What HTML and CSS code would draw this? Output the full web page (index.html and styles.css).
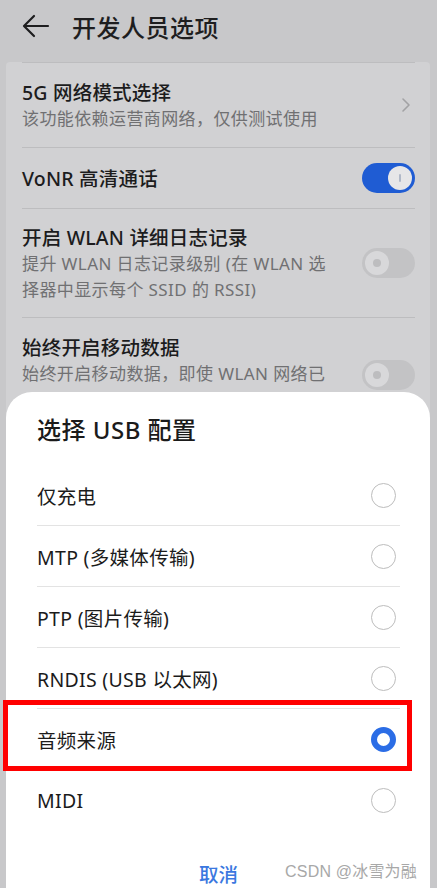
FILE: index.html
```html
<!DOCTYPE html>
<html lang="zh-CN">
<head>
<meta charset="utf-8">
<title>开发人员选项</title>
<link rel="stylesheet" href="styles.css">
</head>
<body>
<div class="screen">
  <header class="topbar">
    <svg class="back" width="28" height="24" viewBox="0 0 28 24"><path d="M26 12H3M12 2L2 12l10 10" fill="none" stroke="#1e1e1f" stroke-width="2.2" stroke-linecap="round" stroke-linejoin="round"/></svg>
    <h1 class="title">开发人员选项</h1>
  </header>
  <section class="card">
    <div class="row r1">
      <div class="txt">
        <div class="rt">5G 网络模式选择</div>
        <div class="rs">该功能依赖运营商网络，仅供测试使用</div>
      </div>
      <svg class="chev" width="10" height="16" viewBox="0 0 10 16"><path d="M2 2l6 6-6 6" fill="none" stroke="#a2a2a4" stroke-width="1.6" stroke-linecap="round" stroke-linejoin="round"/></svg>
    </div>
    <div class="row r2">
      <div class="txt"><div class="rt">VoNR 高清通话</div></div>
      <span class="tog on"><span class="knob"></span></span>
    </div>
    <div class="row r3">
      <div class="txt">
        <div class="rt">开启 WLAN 详细日志记录</div>
        <div class="rs">提升 WLAN 日志记录级别 (在 WLAN 选<br>择器中显示每个 SSID 的 RSSI)</div>
      </div>
      <span class="tog off"><span class="knob"></span></span>
    </div>
    <div class="row r4">
      <div class="txt">
        <div class="rt">始终开启移动数据</div>
        <div class="rs">始终开启移动数据，即使 WLAN 网络已</div>
      </div>
      <span class="tog off"><span class="knob"></span></span>
    </div>
  </section>

  <div class="dialog">
    <h2 class="dtitle">选择 USB 配置</h2>
    <ul class="opts">
      <li class="opt"><span>仅充电</span><span class="radio"></span></li>
      <li class="opt"><span>MTP (多媒体传输)</span><span class="radio"></span></li>
      <li class="opt"><span>PTP (图片传输)</span><span class="radio"></span></li>
      <li class="opt"><span>RNDIS (USB 以太网)</span><span class="radio"></span></li>
      <li class="opt"><span>音频来源</span><span class="radio sel"></span></li>
      <li class="opt last"><span>MIDI</span><span class="radio"></span></li>
    </ul>
    <div class="foot">
      <span class="cancel">取消</span>
    </div>
  </div>
  <div class="mark"></div>
  <div class="wm">CSDN @冰雪为融</div>
</div>
</body>
</html>
```
FILE: styles.css
```css
* { box-sizing: border-box; margin: 0; padding: 0; }
html, body { width: 437px; height: 888px; overflow: hidden; }
body {
  background: #c8c8ca;
  font-family: "Noto Sans", "Noto Sans CJK SC", sans-serif;
  color: #1e1e1f;
}
.screen { position: relative; width: 437px; height: 888px; overflow: hidden; }

.topbar {
  height: 62px;
  display: flex;
  align-items: center;
  padding: 0 0 10px 22px;
}
.back { display: block; margin-right: 22px; }
.title { font-size: 24px; font-weight: 500; letter-spacing: 0.5px; color: #1e1e1f; }

.card {
  margin: 0 7px 0 6px;
  background: #d1d1d3;
  padding: 0 15px 0 16px;
  border-radius: 4px 4px 0 0;
  height: 400px;
}
.row {
  display: flex;
  align-items: center;
  justify-content: space-between;
  border-top: 1px solid #bdbdbf;
}
.r1 { height: 85px; }
.r2 { height: 61px; }
.r3 { height: 109px; }
.r4 { height: 120px; align-items: flex-start; padding-top: 16px; }
.rt { font-size: 19.5px; line-height: 27px; font-weight: 500; color: #1c1c1d; letter-spacing: 0.2px; }
.rs { font-size: 17px; line-height: 26px; color: #707072; letter-spacing: 0.4px; }
.chev { margin-right: 4px; }

.tog {
  position: relative;
  display: block;
  width: 53px;
  height: 30px;
  border-radius: 15px;
  flex: none;
}
.r4 .tog { margin-top: 26px; }
.tog.on { background: #1f5cd3; }
.tog.off { background: #c3c3c5; }
.knob {
  position: absolute;
  top: 3px;
  width: 24px;
  height: 24px;
  border-radius: 50%;
}
.on .knob { right: 3px; background: #e6e6e8; }
.on .knob::after {
  content: ""; position: absolute; left: 11px; top: 8px; width: 2px; height: 8px; background: #b0b8c8; border-radius: 1px;
}
.off .knob { left: 3px; background: #d8d8da; }
.off .knob::after {
  content: ""; position: absolute; left: 8px; top: 8px; width: 8px; height: 8px; background: #bdbdbf; border-radius: 50%;
}

.dialog {
  position: absolute;
  left: 6px;
  width: 424px;
  top: 392px;
  height: 520px;
  background: #fff;
  border-radius: 26px 26px 0 0;
  padding: 0 30px 0 31px;
}
.dtitle {
  font-size: 24px;
  font-weight: 500;
  height: 73px;
  padding-top: 20px;
  line-height: 36px;
  color: #1b1b1b;
  letter-spacing: 0.5px;
}
.opts { list-style: none; }
.opt {
  height: 61px;
  display: flex;
  align-items: center;
  justify-content: space-between;
  border-bottom: 1px solid #e3e3e3;
  font-size: 19.5px;
  color: #1b1b1b;
  padding-right: 4px;
  letter-spacing: 0.3px;
}
.opt.last { border-bottom: none; }
.radio {
  width: 25px; height: 25px; border-radius: 50%;
  border: 1.6px solid #bdbdbd;
  flex: none;
}
.radio.sel { border: 6px solid #2b6de6; }

.foot { display: flex; justify-content: center; padding-top: 30px; line-height: 28px; }
.cancel { font-size: 19.5px; font-weight: 500; color: #3b78e0; }

.mark {
  position: absolute;
  left: 3px; top: 700px;
  width: 409px; height: 71px;
  border: 5px solid #ff0000;
}
.wm {
  position: absolute;
  left: 285px; top: 858px;
  font-size: 16px;
  color: #a8a8a8;
  font-family: "Liberation Sans", "Noto Sans CJK SC", sans-serif;
  letter-spacing: 0.2px;
}
```
